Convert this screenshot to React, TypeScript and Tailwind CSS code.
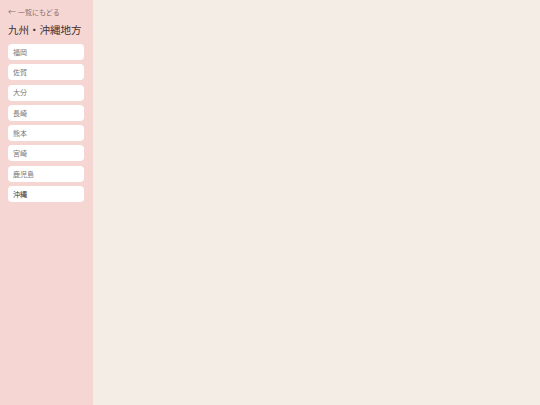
import React from "react";

const prefs = ["福岡", "佐賀", "大分", "長崎", "熊本", "宮崎", "鹿児島", "沖縄"];

export default function App() {
  return (
    <div
      className="flex h-[405px] w-[540px] bg-[#f3ede6]"
      style={{ fontFamily: '"Noto Sans CJK JP", "Noto Sans", sans-serif' }}
    >
      <aside className="flex w-[93px] shrink-0 flex-col bg-[#f6d6d2] pl-2 pt-[7px]">
        <button className="flex items-center gap-[2px] text-left text-[7px] leading-[10px] text-[#8a6f6c]">
          <span className="text-[8px]">←</span>
          <span>一覧にもどる</span>
        </button>
        <h1 className="mt-[6px] whitespace-nowrap text-[10.5px] font-normal leading-[14px] text-[#3f3030]">
          九州・沖縄地方
        </h1>
        <ul className="mt-[7px] flex flex-col gap-[4.3px]">
          {prefs.map((p, i) => (
            <li key={p}>
              <button
                className={`flex h-[16px] w-[76px] items-center rounded-[4px] bg-white px-[5px] text-[7px] ${
                  i === prefs.length - 1 ? "text-[#3b3030]" : "text-[#777]"
                }`}
              >
                {p}
              </button>
            </li>
          ))}
        </ul>
      </aside>
      <main className="flex-1" />
    </div>
  );
}
